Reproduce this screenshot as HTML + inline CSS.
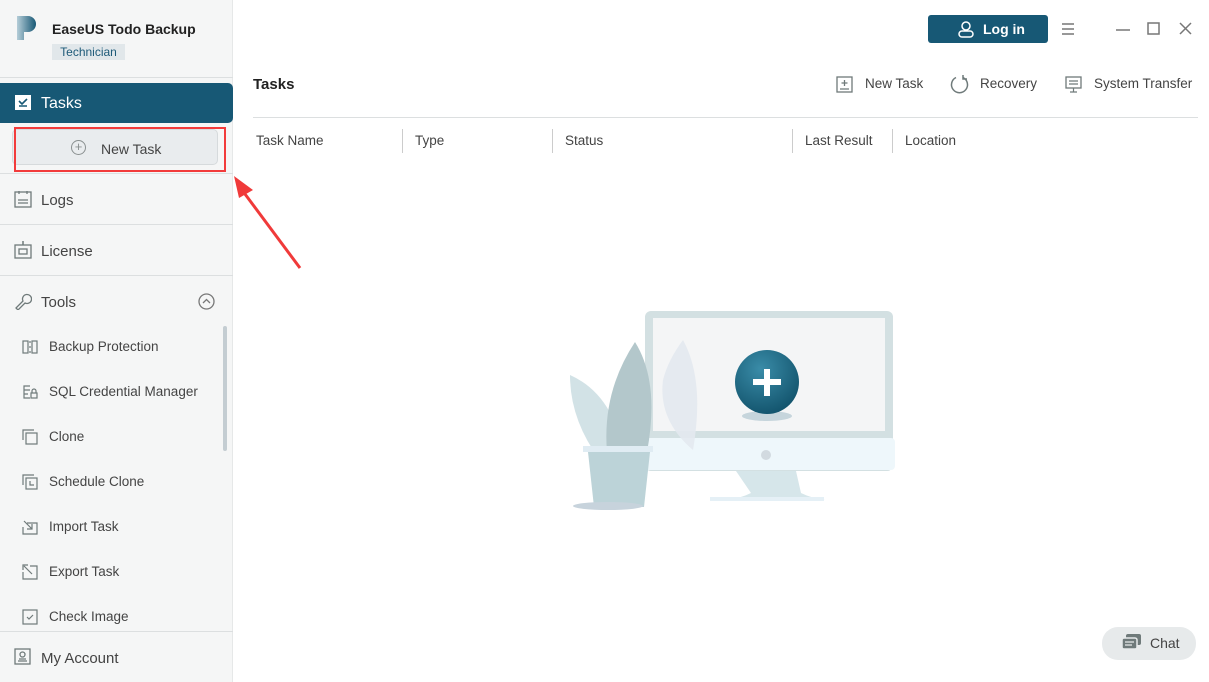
<!DOCTYPE html>
<html><head><meta charset="utf-8"><style>
*{margin:0;padding:0;box-sizing:border-box}
body{width:1209px;height:682px;overflow:hidden;font-family:"Liberation Sans",sans-serif;background:#fff;position:relative;color:#333}
.sb{position:absolute;left:0;top:0;width:233px;height:682px;background:#f5f6f6;border-right:1px solid #e6e8e8}
.abs{position:absolute}
.line{position:absolute;left:0;width:233px;height:1px;background:#dcdfe0}
.nav{position:absolute;left:41px;font-size:15px;color:#444}
.tool{position:absolute;left:49px;font-size:13.5px;color:#444}
.ti{position:absolute;left:22px}
.hdr{position:absolute;top:133px;font-size:13.5px;color:#444}
.sep{position:absolute;top:129px;width:1px;height:24px;background:#ccc}
.tb{position:absolute;top:76px;font-size:13.5px;color:#444}
</style></head><body>
<div class="sb">
  <svg class="abs" style="left:16px;top:15px" width="22" height="26"><defs><linearGradient id="lg" x1="0" x2="1"><stop offset="0" stop-color="#b5cdd8"/><stop offset="1" stop-color="#175875"/></linearGradient></defs><path d="M1 1h11a8 8 0 0 1 0 16H8v8H1z" fill="url(#lg)"/></svg>
  <div class="abs" style="left:52px;top:21px;font-size:14px;font-weight:bold;color:#222">EaseUS Todo Backup</div>
  <div class="abs" style="left:52px;top:44px;width:73px;height:16px;background:#e1e7ea;font-size:12px;color:#1d5a78;text-align:center;line-height:16px">Technician</div>
  <div class="line" style="top:77px"></div>
  <div class="abs" style="left:0;top:83px;width:233px;height:40px;background:#175875;border-radius:0 5px 5px 0"></div>
  <svg class="abs" style="left:15px;top:95px" width="16" height="15"><rect width="16" height="15" fill="#fff"/><path d="M4 6l3 3 5-5M4 11h8" stroke="#175875" stroke-width="1.6" fill="none"/></svg>
  <div class="nav" style="top:95px;color:#fff;font-size:16px">Tasks</div>
  <div class="abs" style="left:12px;top:129px;width:206px;height:36px;background:#e9ecee;border:1px solid #d6dadc;border-radius:5px"></div>
  <div class="abs" style="left:71px;top:140px;width:15px;height:15px;border:1.3px solid #8a9090;border-radius:50%;text-align:center;font-size:13px;line-height:12px;color:#8a9090">+</div>
  <div class="abs" style="left:101px;top:141px;font-size:14px;color:#444">New Task</div>
  <div class="abs" style="left:14px;top:127px;width:212px;height:45px;border:2px solid #f23b3b"></div>
  <div class="line" style="top:173px"></div>
  <svg class="abs" style="left:14px;top:190px" width="18" height="18"><rect x="1" y="2" width="16" height="15" fill="none" stroke="#6f7a7a" stroke-width="1.3"/><path d="M5 1v3M13 1v3M4 10h10M4 13h10" stroke="#6f7a7a" stroke-width="1.3"/></svg>
  <div class="nav" style="top:192px">Logs</div>
  <div class="line" style="top:224px"></div>
  <svg class="abs" style="left:14px;top:240px" width="18" height="19"><rect x="1" y="5" width="16" height="13" fill="none" stroke="#6f7a7a" stroke-width="1.3"/><rect x="5" y="9" width="8" height="5" fill="none" stroke="#6f7a7a" stroke-width="1.3"/><path d="M9 1v4" stroke="#6f7a7a" stroke-width="1.5"/></svg>
  <div class="nav" style="top:243px">License</div>
  <div class="line" style="top:275px"></div>
  <svg class="abs" style="left:14px;top:292px" width="18" height="18"><path d="M2 16l7-7a4.5 4.5 0 1 1 2 2l-7 7z" fill="none" stroke="#6f7a7a" stroke-width="1.3"/></svg>
  <div class="nav" style="top:294px">Tools</div>
  <svg class="abs" style="left:198px;top:293px" width="17" height="17"><circle cx="8.5" cy="8.5" r="7.5" fill="none" stroke="#777" stroke-width="1.3"/><path d="M5 10l3.5-3.5L12 10" fill="none" stroke="#777" stroke-width="1.3"/></svg>
  <div class="abs" style="left:223px;top:326px;width:4px;height:125px;background:#c4cdd2;border-radius:2px"></div>
  <svg class="ti" style="top:339px" width="16" height="16"><g fill="none" stroke="#6f7a7a" stroke-width="1.2"><rect x="1" y="2" width="5" height="12"/><rect x="10" y="2" width="5" height="12"/><path d="M8 2v2M8 7v2M8 12v2"/></g></svg><div class="tool" style="top:339px">Backup Protection</div>
  <svg class="ti" style="top:384px" width="16" height="16"><g fill="none" stroke="#6f7a7a" stroke-width="1.2"><path d="M8 2H2v12h6M2 6h6M2 10h4"/><rect x="9" y="9" width="6" height="5"/><path d="M10 9V7a2 2 0 0 1 4 0v2"/></g></svg><div class="tool" style="top:384px">SQL Credential Manager</div>
  <svg class="ti" style="top:429px" width="16" height="16"><g fill="none" stroke="#6f7a7a" stroke-width="1.2"><path d="M1 11V1h11"/><rect x="4" y="4" width="11" height="11"/></g></svg><div class="tool" style="top:429px">Clone</div>
  <svg class="ti" style="top:474px" width="16" height="16"><g fill="none" stroke="#6f7a7a" stroke-width="1.2"><path d="M1 11V1h11"/><rect x="4" y="4" width="11" height="11"/><path d="M8 7v4h4"/></g></svg><div class="tool" style="top:474px">Schedule Clone</div>
  <svg class="ti" style="top:519px" width="16" height="16"><g fill="none" stroke="#6f7a7a" stroke-width="1.2"><path d="M5 4h10v11H1V8"/><path d="M2 2l8 8M5 10h5V5"/></g></svg><div class="tool" style="top:519px">Import Task</div>
  <svg class="ti" style="top:564px" width="16" height="16"><g fill="none" stroke="#6f7a7a" stroke-width="1.2"><path d="M8 2h7v13H1V8"/><path d="M2 2l8 8M1 6V1h5"/></g></svg><div class="tool" style="top:564px">Export Task</div>
  <svg class="ti" style="top:609px" width="16" height="16"><g fill="none" stroke="#6f7a7a" stroke-width="1.2"><rect x="1" y="1" width="14" height="14"/><path d="M5 8l2 2 4-4"/></g></svg><div class="tool" style="top:609px">Check Image</div>
  <div class="line" style="top:631px"></div>
  <svg class="abs" style="left:14px;top:648px" width="18" height="18"><g fill="none" stroke="#6f7a7a" stroke-width="1.3"><rect x="1" y="1" width="15" height="15"/><circle cx="8.5" cy="6.5" r="2.5"/><path d="M4 13h9M5 11h7"/></g></svg>
  <div class="nav" style="top:650px">My Account</div>
</div>
<svg class="abs" style="left:228px;top:170px" width="80" height="105"><line x1="72" y1="98" x2="14" y2="20" stroke="#f03a3a" stroke-width="3"/><polygon points="6,6 25,20 11,28" fill="#f03a3a"/></svg>

<div class="abs" style="left:928px;top:15px;width:120px;height:28px;background:#175875;border-radius:3px;color:#fff;font-size:14px;font-weight:bold;line-height:28px;padding-left:55px">Log in</div>
<svg class="abs" style="left:957px;top:20px" width="18" height="18"><circle cx="9" cy="6" r="4" fill="none" stroke="#fff" stroke-width="1.5"/><rect x="2" y="11" width="14" height="6" rx="3" fill="none" stroke="#fff" stroke-width="1.5"/></svg>
<svg class="abs" style="left:1060px;top:20px" width="140" height="20"><g stroke="#777" stroke-width="1.5" fill="none"><path d="M2 4h12M2 9h12M2 14h12"/><path d="M56 10h14"/><rect x="88" y="3" width="11" height="11"/><path d="M120 3l11 11M131 3l-11 11"/></g></svg>

<div class="abs" style="left:253px;top:76px;font-size:15px;font-weight:bold;color:#222">Tasks</div>
<svg class="abs" style="left:836px;top:76px" width="17" height="17"><g fill="none" stroke="#6f7a7a" stroke-width="1.3"><rect x="1" y="1" width="15" height="15"/><path d="M8.5 4v6M5.5 7h6M4 13h9"/></g></svg>
<div class="tb" style="left:865px">New Task</div>
<svg class="abs" style="left:950px;top:74px" width="20" height="20"><path d="M13 3.5A8 8 0 1 1 6 3.5" fill="none" stroke="#6f7a7a" stroke-width="1.5"/><path d="M13 1v4h4" fill="none" stroke="#6f7a7a" stroke-width="1.5"/></svg>
<div class="tb" style="left:980px">Recovery</div>
<svg class="abs" style="left:1065px;top:76px" width="18" height="18"><rect x="1" y="1" width="15" height="11" fill="none" stroke="#6f7a7a" stroke-width="1.3"/><path d="M8.5 12v4M5 16h7M4 5h9M4 8h9" stroke="#6f7a7a" stroke-width="1.2"/></svg>
<div class="tb" style="left:1094px">System Transfer</div>
<div class="abs" style="left:253px;top:117px;width:945px;height:1px;background:#dcdfe0"></div>
<div class="hdr" style="left:256px">Task Name</div>
<div class="sep" style="left:402px"></div><div class="hdr" style="left:415px">Type</div>
<div class="sep" style="left:552px"></div><div class="hdr" style="left:565px">Status</div>
<div class="sep" style="left:792px"></div><div class="hdr" style="left:805px">Last Result</div>
<div class="sep" style="left:892px"></div><div class="hdr" style="left:905px">Location</div>

<svg class="abs" style="left:540px;top:300px" width="370" height="220">
<rect x="105" y="11" width="248" height="160" rx="6" fill="#d3e0e2"/>
<rect x="113" y="18" width="232" height="113" fill="#f4f5f6"/>
<rect x="103" y="138" width="252" height="32" rx="4" fill="#eef7fb"/>
<circle cx="226" cy="155" r="5" fill="#d2dae0"/>
<path d="M196 171h60l5 22q10 5 24 7h-98q14-2 24-7z" fill="#d6e6ea"/>
<rect x="170" y="197" width="114" height="4" fill="#e5f0f6"/>
<path d="M143 40q22 40 10 110q-35-30-30-70q5-20 20-40z" fill="#e3e9ef" opacity=".9"/>
<path d="M30 75q45 20 55 85h-25q-30-40-30-85z" fill="#d2e2e6"/>
<path d="M95 42q25 40 12 110h-40q-5-60 28-110z" fill="#b3c7cb"/>
<rect x="43" y="146" width="70" height="6" fill="#e0ecf3"/>
<path d="M48 152h62l-6 55h-50z" fill="#bcd3d8"/>
<ellipse cx="68" cy="206" rx="35" ry="4" fill="#c7d3dc"/>
<ellipse cx="227" cy="116" rx="25" ry="5" fill="#c6d5dc"/>
<defs><radialGradient id="g" cx=".4" cy=".3" r=".7"><stop offset="0" stop-color="#3a8ca8"/><stop offset="1" stop-color="#14566f"/></radialGradient></defs>
<circle cx="227" cy="82" r="32" fill="url(#g)"/>
<path d="M227 69v27M213 82h28" stroke="#fff" stroke-width="6"/>
</svg>

<div class="abs" style="left:1102px;top:627px;width:94px;height:33px;background:#e7eaeb;border-radius:16px"></div>
<svg class="abs" style="left:1121px;top:633px" width="22" height="20"><rect x="5" y="1" width="15" height="11" rx="2" fill="#6f7a7a"/><rect x="1" y="5" width="15" height="11" rx="2" fill="#6f7a7a" stroke="#e7eaeb" stroke-width="1.5"/><path d="M4 9h9M4 12h7" stroke="#e7eaeb" stroke-width="1.2"/></svg>
<div class="abs" style="left:1150px;top:635px;font-size:14px;color:#444">Chat</div>
</body></html>
